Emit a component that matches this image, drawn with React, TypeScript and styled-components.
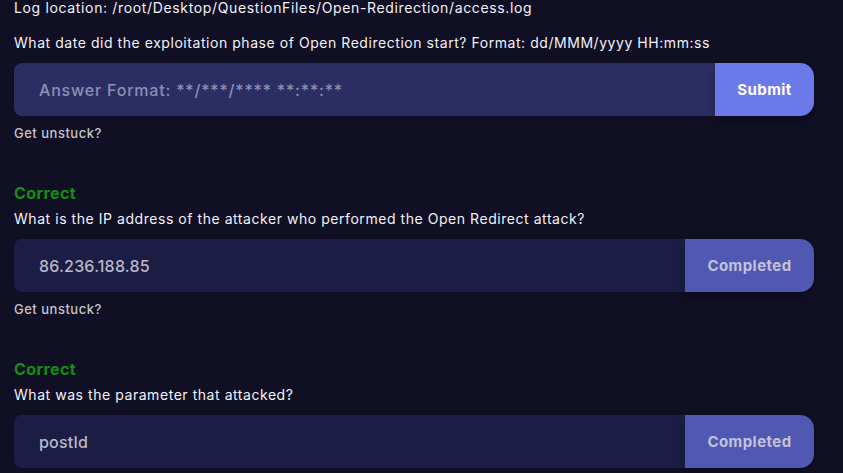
import React from "react";
import styled, { createGlobalStyle } from "styled-components";

const GlobalStyle = createGlobalStyle`
  html, body {
    margin: 0;
    padding: 0;
    background: #100f24;
  }
  body {
    font-family: Inter, "Open Sans", "Liberation Sans", sans-serif;
    color: #ffffff;
    overflow: hidden;
  }
`;

const Page = styled.div`
  width: 843px;
  height: 473px;
  overflow: hidden;
  box-sizing: border-box;
  padding: 0 29px 0 14px;
  display: flex;
  flex-direction: column;
  background: #100f24;
`;

const LogLine = styled.div`
  font-size: 14px;
  line-height: 16px;
  letter-spacing: 0.65px;
  color: #f2f2f8;
  margin-bottom: 17px;
`;

const Section = styled.section`
  display: flex;
  flex-direction: column;
  margin-bottom: 40px;
`;

const Status = styled.div`
  font-size: 16px;
  font-weight: 700;
  line-height: 20px;
  letter-spacing: 0.4px;
  color: #138f13;
  margin-bottom: 6px;
`;

const Question = styled.div`
  font-size: 14px;
  line-height: 20px;
  letter-spacing: 0.55px;
  color: #f2f2f8;
  margin-bottom: 10px;
`;

const AnswerRow = styled.div`
  display: flex;
  height: 53px;
  width: 800px;
`;

const Field = styled.div<{ $done?: boolean }>`
  flex: 1;
  display: flex;
  align-items: center;
  padding-left: 25px;
  border-radius: 8px 0 0 8px;
  background: ${(p) => (p.$done ? "#1c1d44" : "#2c2e63")};
  color: ${(p) => (p.$done ? "#b9b9c9" : "#8d8fb6")};
  font-size: 16px;
  font-weight: 500;
  letter-spacing: ${(p) => (p.$done ? "0.2px" : "0.8px")};
`;

const ActionButton = styled.div<{ $done?: boolean }>`
  width: ${(p) => (p.$done ? "129px" : "99px")};
  display: flex;
  align-items: center;
  justify-content: center;
  border-radius: 0 14px 14px 0;
  background: ${(p) => (p.$done ? "#5058b3" : "#6c79e9")};
  color: ${(p) => (p.$done ? "#c2c2d6" : "#ffffff")};
  font-size: 15px;
  font-weight: 700;
  letter-spacing: 0.45px;
  box-shadow: 0 6px 10px rgba(0, 0, 0, 0.18);
`;

const Help = styled.div`
  margin-top: 7px;
  font-size: 13px;
  font-weight: 500;
  line-height: 20px;
  letter-spacing: 0.5px;
  color: #c4c4cc;
`;

type Q = {
  correct?: boolean;
  question: string;
  value?: string;
  placeholder?: string;
  help: boolean;
};

const questions: Q[] = [
  {
    question:
      "What date did the exploitation phase of Open Redirection start? Format: dd/MMM/yyyy HH:mm:ss",
    placeholder: "Answer Format: **/***/**** **:**:**",
    help: true,
  },
  {
    correct: true,
    question:
      "What is the IP address of the attacker who performed the Open Redirect attack?",
    value: "86.236.188.85",
    help: true,
  },
  {
    correct: true,
    question: "What was the parameter that attacked?",
    value: "postId",
    help: false,
  },
];

export default function App() {
  return (
    <>
      <GlobalStyle />
      <Page>
        <LogLine>
          Log location: /root/Desktop/QuestionFiles/Open-Redirection/access.log
        </LogLine>
        {questions.map((q, i) => (
          <Section key={i}>
            {q.correct && <Status>Correct</Status>}
            <Question>{q.question}</Question>
            <AnswerRow>
              <Field $done={q.correct}>{q.value ?? q.placeholder}</Field>
              <ActionButton $done={q.correct}>
                {q.correct ? "Completed" : "Submit"}
              </ActionButton>
            </AnswerRow>
            {q.help && <Help>Get unstuck?</Help>}
          </Section>
        ))}
      </Page>
    </>
  );
}
